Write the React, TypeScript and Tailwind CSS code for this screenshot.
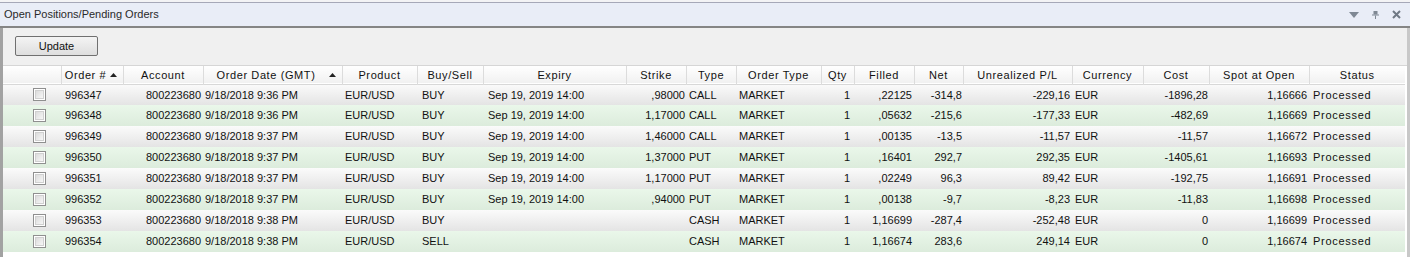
import React from 'react'

type Col = {
  title: string
  width: number
  align: 'left' | 'right'
  pad: string
  sort?: boolean
}

const columns: Col[] = [
  { title: '', width: 58, align: 'left', pad: '' },
  { title: 'Order #', width: 62, align: 'left', pad: 'pl-[4px]', sort: true },
  { title: 'Account', width: 80, align: 'right', pad: 'pr-[2px]' },
  { title: 'Order Date (GMT)', width: 139, align: 'left', pad: 'pl-[2px]', sort: true },
  { title: 'Product', width: 75, align: 'left', pad: 'pl-[3px]' },
  { title: 'Buy/Sell', width: 66, align: 'left', pad: 'pl-[5px]' },
  { title: 'Expiry', width: 143, align: 'left', pad: 'pl-[5px]' },
  { title: 'Strike', width: 60, align: 'right', pad: 'pr-[1px]' },
  { title: 'Type', width: 50, align: 'left', pad: 'pl-[3px]' },
  { title: 'Order Type', width: 85, align: 'left', pad: 'pl-[3px]' },
  { title: 'Qty', width: 33, align: 'right', pad: 'pr-[4px]' },
  { title: 'Filled', width: 60, align: 'right', pad: 'pr-[2px]' },
  { title: 'Net', width: 49, align: 'right', pad: 'pr-[1px]' },
  { title: 'Unrealized P/L', width: 109, align: 'right', pad: 'pr-[2px]' },
  { title: 'Currency', width: 71, align: 'left', pad: 'pl-[3px]' },
  { title: 'Cost', width: 66, align: 'right', pad: 'pr-[1px]' },
  { title: 'Spot at Open', width: 100, align: 'right', pad: 'pr-[2px]' },
  { title: 'Status', width: 96, align: 'left', pad: 'pl-[4px]' },
]

const rows: string[][] = [
  ['996347', '800223680', '9/18/2018 9:36 PM', 'EUR/USD', 'BUY', 'Sep 19, 2019 14:00', ',98000', 'CALL', 'MARKET', '1', ',22125', '-314,8', '-229,16', 'EUR', '-1896,28', '1,16666', 'Processed'],
  ['996348', '800223680', '9/18/2018 9:36 PM', 'EUR/USD', 'BUY', 'Sep 19, 2019 14:00', '1,17000', 'CALL', 'MARKET', '1', ',05632', '-215,6', '-177,33', 'EUR', '-482,69', '1,16669', 'Processed'],
  ['996349', '800223680', '9/18/2018 9:37 PM', 'EUR/USD', 'BUY', 'Sep 19, 2019 14:00', '1,46000', 'CALL', 'MARKET', '1', ',00135', '-13,5', '-11,57', 'EUR', '-11,57', '1,16672', 'Processed'],
  ['996350', '800223680', '9/18/2018 9:37 PM', 'EUR/USD', 'BUY', 'Sep 19, 2019 14:00', '1,37000', 'PUT', 'MARKET', '1', ',16401', '292,7', '292,35', 'EUR', '-1405,61', '1,16693', 'Processed'],
  ['996351', '800223680', '9/18/2018 9:37 PM', 'EUR/USD', 'BUY', 'Sep 19, 2019 14:00', '1,17000', 'PUT', 'MARKET', '1', ',02249', '96,3', '89,42', 'EUR', '-192,75', '1,16691', 'Processed'],
  ['996352', '800223680', '9/18/2018 9:37 PM', 'EUR/USD', 'BUY', 'Sep 19, 2019 14:00', ',94000', 'PUT', 'MARKET', '1', ',00138', '-9,7', '-8,23', 'EUR', '-11,83', '1,16698', 'Processed'],
  ['996353', '800223680', '9/18/2018 9:38 PM', 'EUR/USD', 'BUY', '', '', 'CASH', 'MARKET', '1', '1,16699', '-287,4', '-252,48', 'EUR', '0', '1,16699', 'Processed'],
  ['996354', '800223680', '9/18/2018 9:38 PM', 'EUR/USD', 'SELL', '', '', 'CASH', 'MARKET', '1', '1,16674', '283,6', '249,14', 'EUR', '0', '1,16674', 'Processed'],
]

const SortArrow = () => (
  <svg width="7" height="4" viewBox="0 0 7 4" className="mr-[6px] shrink-0">
    <path d="M0 4 L3.5 0 L7 4 Z" fill="#222" />
  </svg>
)

const Checkbox = () => (
  <div className="w-[13px] h-[13px] border border-[#8f8f8f] bg-white p-[1px]">
    <div className="w-full h-full border border-[#d0d0d0] bg-gradient-to-br from-[#dcdcdc] to-[#f6f6f6]" />
  </div>
)

export default function App() {
  return (
    <div className="w-[1410px] h-[257px] bg-white overflow-hidden flex flex-col text-[11px] text-[#111] font-['Liberation_Sans',Arial,sans-serif]">
      <div className="h-[2px] bg-[#f3f3f5] shrink-0" />
      {/* title bar */}
      <div className="h-[26px] shrink-0 flex items-center bg-[#e9edf7] border-t border-[#a6a8b8] border-b-2 border-b-[#858585] pl-[4px] pr-[9px] text-[#2a2a2a]">
        <span className="flex-1">Open Positions/Pending Orders</span>
        <div className="flex items-center gap-[13px]">
          <svg width="10" height="6" viewBox="0 0 10 6">
            <path d="M0 0 H10 L5 6 Z" fill="#7f8894" />
          </svg>
          <svg width="7" height="8" viewBox="0 0 7 8">
            <rect x="1.5" y="0" width="4" height="3.5" fill="#7f8894" />
            <rect x="0" y="3.5" width="7" height="1" fill="#7f8894" />
            <rect x="3" y="4.5" width="1" height="3.5" fill="#7f8894" />
          </svg>
          <svg width="9" height="9" viewBox="0 0 9 9">
            <path d="M1 1 L8 8 M8 1 L1 8" stroke="#6f7884" strokeWidth="2" />
          </svg>
        </div>
      </div>

      <div className="flex-1 flex flex-col border-l-[3px] border-l-[#a2a2a2] border-r-[3px] border-r-[#c8c8c8]">
        {/* toolbar */}
        <div className="h-[38px] shrink-0 bg-[#f0f0f0] border-b border-[#d6d6d6] pl-[12px] pt-[8px]">
          <button className="w-[83px] h-[20px] rounded-[2px] border border-[#707070] bg-gradient-to-b from-[#f4f4f4] to-[#dedede] text-[11px] text-[#111]">
            Update
          </button>
        </div>

        {/* grid */}
        <table className="table-fixed border-collapse w-[1402px]">
          <colgroup>
            {columns.map((c, i) => (
              <col key={i} style={{ width: c.width }} />
            ))}
          </colgroup>
          <thead>
            <tr className="h-[18px] bg-gradient-to-b from-white to-[#f1f1f1] border-b border-[#d8d8d8]">
              {columns.map((c, i) => (
                <th key={i} className={`p-0 font-normal tracking-[0.6px] ${i > 0 ? 'border-l border-[#dcdcdc]' : ''}`}>
                  <div className="flex items-center">
                    <span className="flex-1 text-center whitespace-nowrap">{c.title}</span>
                    {c.sort && <SortArrow />}
                  </div>
                </th>
              ))}
            </tr>
          </thead>
          <tbody>
            {rows.map((r, ri) => (
              <tr
                key={ri}
                className={`h-[21px] ${ri % 2 === 0 ? 'bg-gradient-to-b from-[#fbfbfb] to-[#e4e4e4]' : 'bg-gradient-to-b from-[#eaf7ea] to-[#dcecdc]'}`}
              >
                <td className="p-0">
                  <div className="flex pl-[30px]">
                    <Checkbox />
                  </div>
                </td>
                {r.map((v, ci) => {
                  const c = columns[ci + 1]
                  return (
                    <td
                      key={ci}
                      className={`p-0 whitespace-nowrap overflow-hidden ${c.pad} ${c.align === 'right' ? 'text-right' : 'text-left'} ${c.title === 'Status' ? 'tracking-[0.7px]' : ''}`}
                    >
                      {v}
                    </td>
                  )
                })}
              </tr>
            ))}
          </tbody>
        </table>
      </div>
    </div>
  )
}
